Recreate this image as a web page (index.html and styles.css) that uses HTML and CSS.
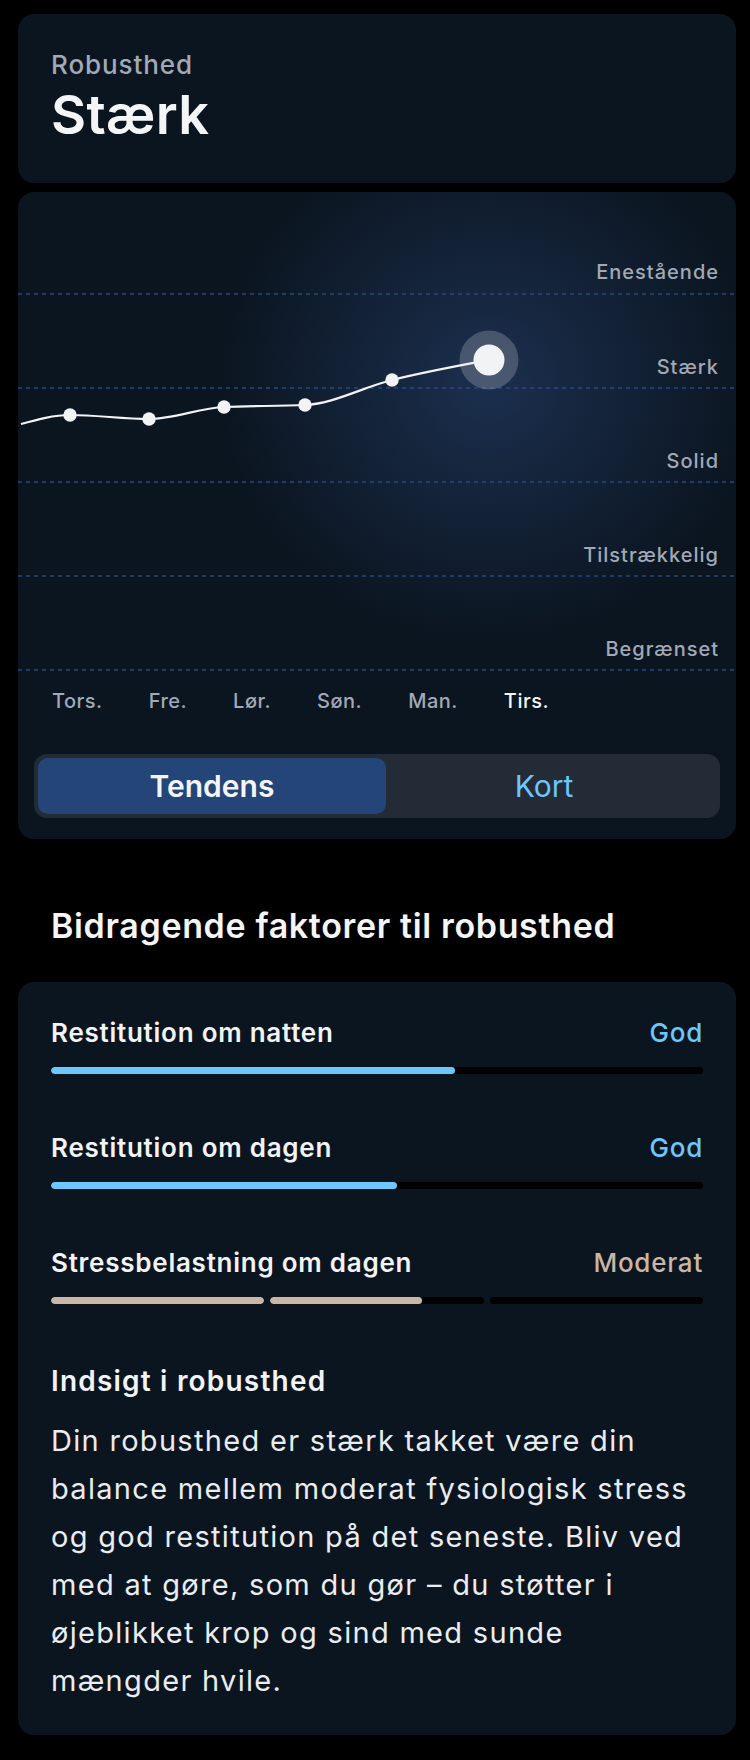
FILE: index.html
```html
<!doctype html>
<html lang="da">
<head>
	<meta charset="UTF-8" />
	<title>Robusthed</title>
<link rel="stylesheet" href="styles.css">
</head>
<body>
	<section id="wrap">
		<div class="card summary">
			<p class="summary-label">Robusthed</p>
			<h1 class="summary-value">Stærk</h1>
		</div>

		<div class="card trend">
			<svg class="chart" width="718" height="490" viewBox="0 0 718 490">
				<g class="grid">
					<line x1="0" y1="102" x2="718" y2="102"/>
					<line x1="0" y1="196" x2="718" y2="196"/>
					<line x1="0" y1="290" x2="718" y2="290"/>
					<line x1="0" y1="384" x2="718" y2="384"/>
					<line x1="0" y1="478" x2="718" y2="478"/>
				</g>
				<g class="levels">
					<text x="701" y="87">Enestående</text>
					<text x="701" y="182">Stærk</text>
					<text x="701" y="276">Solid</text>
					<text x="701" y="370">Tilstrækkelig</text>
					<text x="701" y="464">Begrænset</text>
				</g>
				<path class="curve" d="M3,232 C19.3,227.5 35.7,223 52,223 C78.3,223 104.7,227 131,227 C156,227 181,216.2 206,215 C233,213.7 260,214.3 287,213 C316,211.6 345,195.2 374,188 C406.3,180 438.7,174 471,168"/>
				<g class="dots">
					<circle cx="52" cy="223" r="6.7"/>
					<circle cx="131" cy="227" r="6.7"/>
					<circle cx="206" cy="215" r="6.7"/>
					<circle cx="287" cy="213" r="6.7"/>
					<circle cx="374" cy="188" r="6.7"/>
				</g>
				<circle class="halo" cx="471" cy="168" r="29.5"/>
				<circle class="now" cx="471" cy="168" r="15.5"/>
			</svg>
			<div class="days">
				<span>Tors.</span>
				<span>Fre.</span>
				<span>Lør.</span>
				<span>Søn.</span>
				<span>Man.</span>
				<span class="today">Tirs.</span>
			</div>
			<div class="toggle">
				<a href="javascript:;" class="active">Tendens</a>
				<a href="javascript:;">Kort</a>
			</div>
		</div>

		<h2 class="section-title">Bidragende faktorer til robusthed</h2>

		<div class="card factors">
			<div class="factor">
				<div class="factor-head">
					<span>Restitution om natten</span>
					<span class="good">God</span>
				</div>
				<div class="bar"><i class="fill good-fill" style="width:62%"></i></div>
			</div>
			<div class="factor">
				<div class="factor-head">
					<span>Restitution om dagen</span>
					<span class="good">God</span>
				</div>
				<div class="bar"><i class="fill good-fill" style="width:53%"></i></div>
			</div>
			<div class="factor">
				<div class="factor-head">
					<span>Stressbelastning om dagen</span>
					<span class="moderate">Moderat</span>
				</div>
				<div class="segments">
					<div class="bar"><i class="fill moderate-fill" style="width:100%"></i></div>
					<div class="bar"><i class="fill moderate-fill" style="width:71%"></i></div>
					<div class="bar"></div>
				</div>
			</div>

			<h3 class="insight-title">Indsigt i robusthed</h3>
			<p class="insight-text">Din robusthed er stærk takket være din balance mellem moderat fysiologisk stress og god restitution på det seneste. Bliv ved med at gøre, som du gør – du støtter i øjeblikket krop og sind med sunde mængder hvile.</p>
		</div>
	</section>
</body>
</html>
```

FILE: styles.css
```css
*{
	margin: 0;
	padding: 0;
	box-sizing: border-box;
}
body{
	background: #000;
	font-family: Inter, "Noto Sans", sans-serif;
	color: #f2f3f5;
}
#wrap{
	width: 750px;
	padding: 14px 14px 23px 18px;
}
.card{
	background: #0b1520;
	border-radius: 16px;
}

/* summary */
.summary{
	height: 169px;
	padding: 35px 33px 0;
}
.summary-label{
	font-size: 26px;
	line-height: 32px;
	font-weight: 500;
	letter-spacing: 0.9px;
	color: #a2a9b6;
}
.summary-value{
	margin-top: 4px;
	font-size: 54px;
	line-height: 60px;
	font-weight: 600;
	letter-spacing: 0.3px;
	color: #f4f5f7;
}

/* trend chart */
.trend{
	margin-top: 9px;
	height: 647px;
	background: radial-gradient(270px 260px at 470px 190px, #1b2f4e 0%, rgba(11,21,32,0) 100%), #0b1520;
	overflow: hidden;
}
.chart{
	display: block;
}
.grid line{
	stroke: #234a86;
	stroke-width: 1.5;
	stroke-dasharray: 4 4;
}
.levels text{
	font-family: Inter, "Noto Sans", sans-serif;
	font-size: 20px;
	font-weight: 500;
	letter-spacing: 1px;
	fill: #a2a9b6;
	text-anchor: end;
}
.curve{
	fill: none;
	stroke: #f2f3f5;
	stroke-width: 2.2;
}
.dots circle,
.now{
	fill: #f2f3f5;
}
.halo{
	fill: #f2f3f5;
	fill-opacity: 0.22;
}
.days{
	display: flex;
	gap: 46px;
	margin-top: 7px;
	padding-left: 34px;
	font-size: 20px;
	line-height: 24px;
	font-weight: 500;
	letter-spacing: 0.5px;
	color: #a2a9b6;
}
.days .today{
	color: #f4f5f7;
}
.toggle{
	display: flex;
	margin: 41px 16px 0;
	height: 64px;
	padding: 4px;
	background: #232b37;
	border-radius: 13px;
}
.toggle a{
	flex: 1;
	display: flex;
	align-items: center;
	justify-content: center;
	padding-right: 14px;
	font-size: 30px;
	color: #6dc6fc;
	text-decoration: none;
	border-radius: 10px;
}
.toggle a.active{
	flex: 0 0 348px;
	padding-right: 0;
	background: #234578;
	color: #f4f5f7;
	font-weight: 600;
}

/* factors */
.section-title{
	margin: 67px 0 36px 33px;
	font-size: 34px;
	line-height: 40px;
	font-weight: 600;
	letter-spacing: 0.65px;
	color: #f4f5f7;
}
.factors{
	padding: 35px 33px 30px;
}
.factor + .factor{
	margin-top: 58px;
}
.factor-head{
	display: flex;
	justify-content: space-between;
	font-size: 26px;
	line-height: 32px;
	font-weight: 600;
	letter-spacing: 0.75px;
}
.good{
	color: #6dc6fc;
	font-weight: 500;
}
.moderate{
	color: #c9b6a6;
	font-weight: 500;
}
.bar{
	margin-top: 18px;
	height: 7px;
	background: #000;
	border-radius: 4px;
	overflow: hidden;
}
.fill{
	display: block;
	height: 100%;
	border-radius: 4px;
}
.good-fill{
	background: #6dc6fc;
}
.moderate-fill{
	background: #c9b6a6;
}
.segments{
	display: flex;
	gap: 6px;
	margin-top: 18px;
}
.segments .bar{
	flex: 1;
	margin-top: 0;
}
.insight-title{
	margin-top: 60px;
	font-size: 28px;
	line-height: 34px;
	font-weight: 600;
	letter-spacing: 1.2px;
}
.insight-text{
	margin-top: 19px;
	font-size: 29px;
	line-height: 48px;
	font-weight: 400;
	letter-spacing: 1.3px;
	color: #e9ecf0;
}
```
